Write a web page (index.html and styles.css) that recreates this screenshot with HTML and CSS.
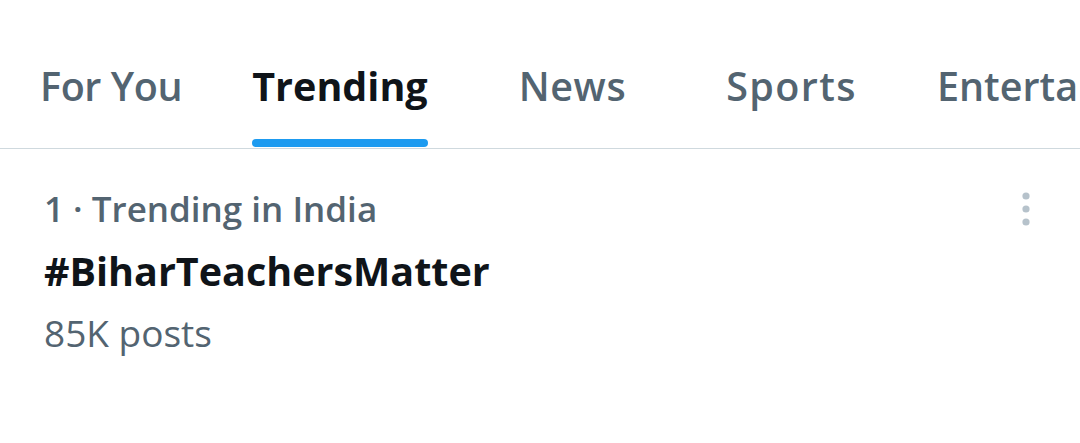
FILE: index.html
```html
<!DOCTYPE html>
<html>
<head>
<meta charset="utf-8">
<link rel="stylesheet" href="styles.css">
</head>
<body>
<div class="page">
  <nav class="tabs">
    <div class="tab tab-foryou"><span class="tab-label">For You</span></div>
    <div class="tab tab-trending active"><span class="tab-label">Trending</span><span class="indicator"></span></div>
    <div class="tab tab-news"><span class="tab-label">News</span></div>
    <div class="tab tab-sports"><span class="tab-label">Sports</span></div>
    <div class="tab tab-ent"><span class="tab-label">Entertainment</span></div>
  </nav>
  <section class="trend">
    <div class="trend-text">
      <div class="trend-meta">1 · Trending in India</div>
      <div class="trend-tag">#BiharTeachersMatter</div>
      <div class="trend-count">85K posts</div>
    </div>
    <div class="more">
      <svg width="12" height="36" viewBox="0 0 12 36"><circle cx="6" cy="5" r="3.6"/><circle cx="6" cy="18" r="3.6"/><circle cx="6" cy="31" r="3.6"/></svg>
    </div>
  </section>
</div>
</body>
</html>
```

FILE: styles.css
```css
html, body {
  margin: 0;
  padding: 0;
  background: #ffffff;
}
body {
  width: 1080px;
  height: 443px;
  overflow: hidden;
  font-family: "Open Sans", "Liberation Sans", sans-serif;
}
.page {
  width: 1080px;
}
.tabs {
  display: flex;
  height: 148px;
  border-bottom: 1px solid #cfd9de;
  padding-left: 40px;
  white-space: nowrap;
  overflow: hidden;
}
.tab {
  position: relative;
  flex: none;
  display: flex;
  align-items: center;
  padding-top: 24px;
  box-sizing: border-box;
  height: 148px;
  font-size: 39.5px;
  font-weight: 600;
  color: #536471;
}
.tab-foryou { letter-spacing: -0.4px; }
.tab-trending { margin-left: 70px; }
.tab-news { margin-left: 91px; letter-spacing: 0.6px; }
.tab-sports { margin-left: 100px; letter-spacing: 1.4px; }
.tab-ent { margin-left: 80px; }
.tab.active {
  color: #0f1419;
  font-weight: 700;
}
.indicator {
  position: absolute;
  left: 0;
  right: 0;
  bottom: 1px;
  height: 8px;
  border-radius: 4px;
  background: #1d9bf0;
}
.trend {
  display: flex;
  justify-content: space-between;
  padding: 35px 48px 0 44px;
}
.trend-meta {
  font-size: 35px;
  font-weight: 600;
  color: #536471;
  line-height: 50px;
}
.trend-tag {
  font-size: 39.5px;
  font-weight: 700;
  color: #0f1419;
  line-height: 54px;
  margin-top: 10px;
}
.trend-count {
  font-size: 37px;
  font-weight: 400;
  color: #536471;
  line-height: 50px;
  margin-top: 10px;
}
.more {
  padding-top: 7px;
}
.more svg circle {
  fill: #b6c2cb;
}
```
